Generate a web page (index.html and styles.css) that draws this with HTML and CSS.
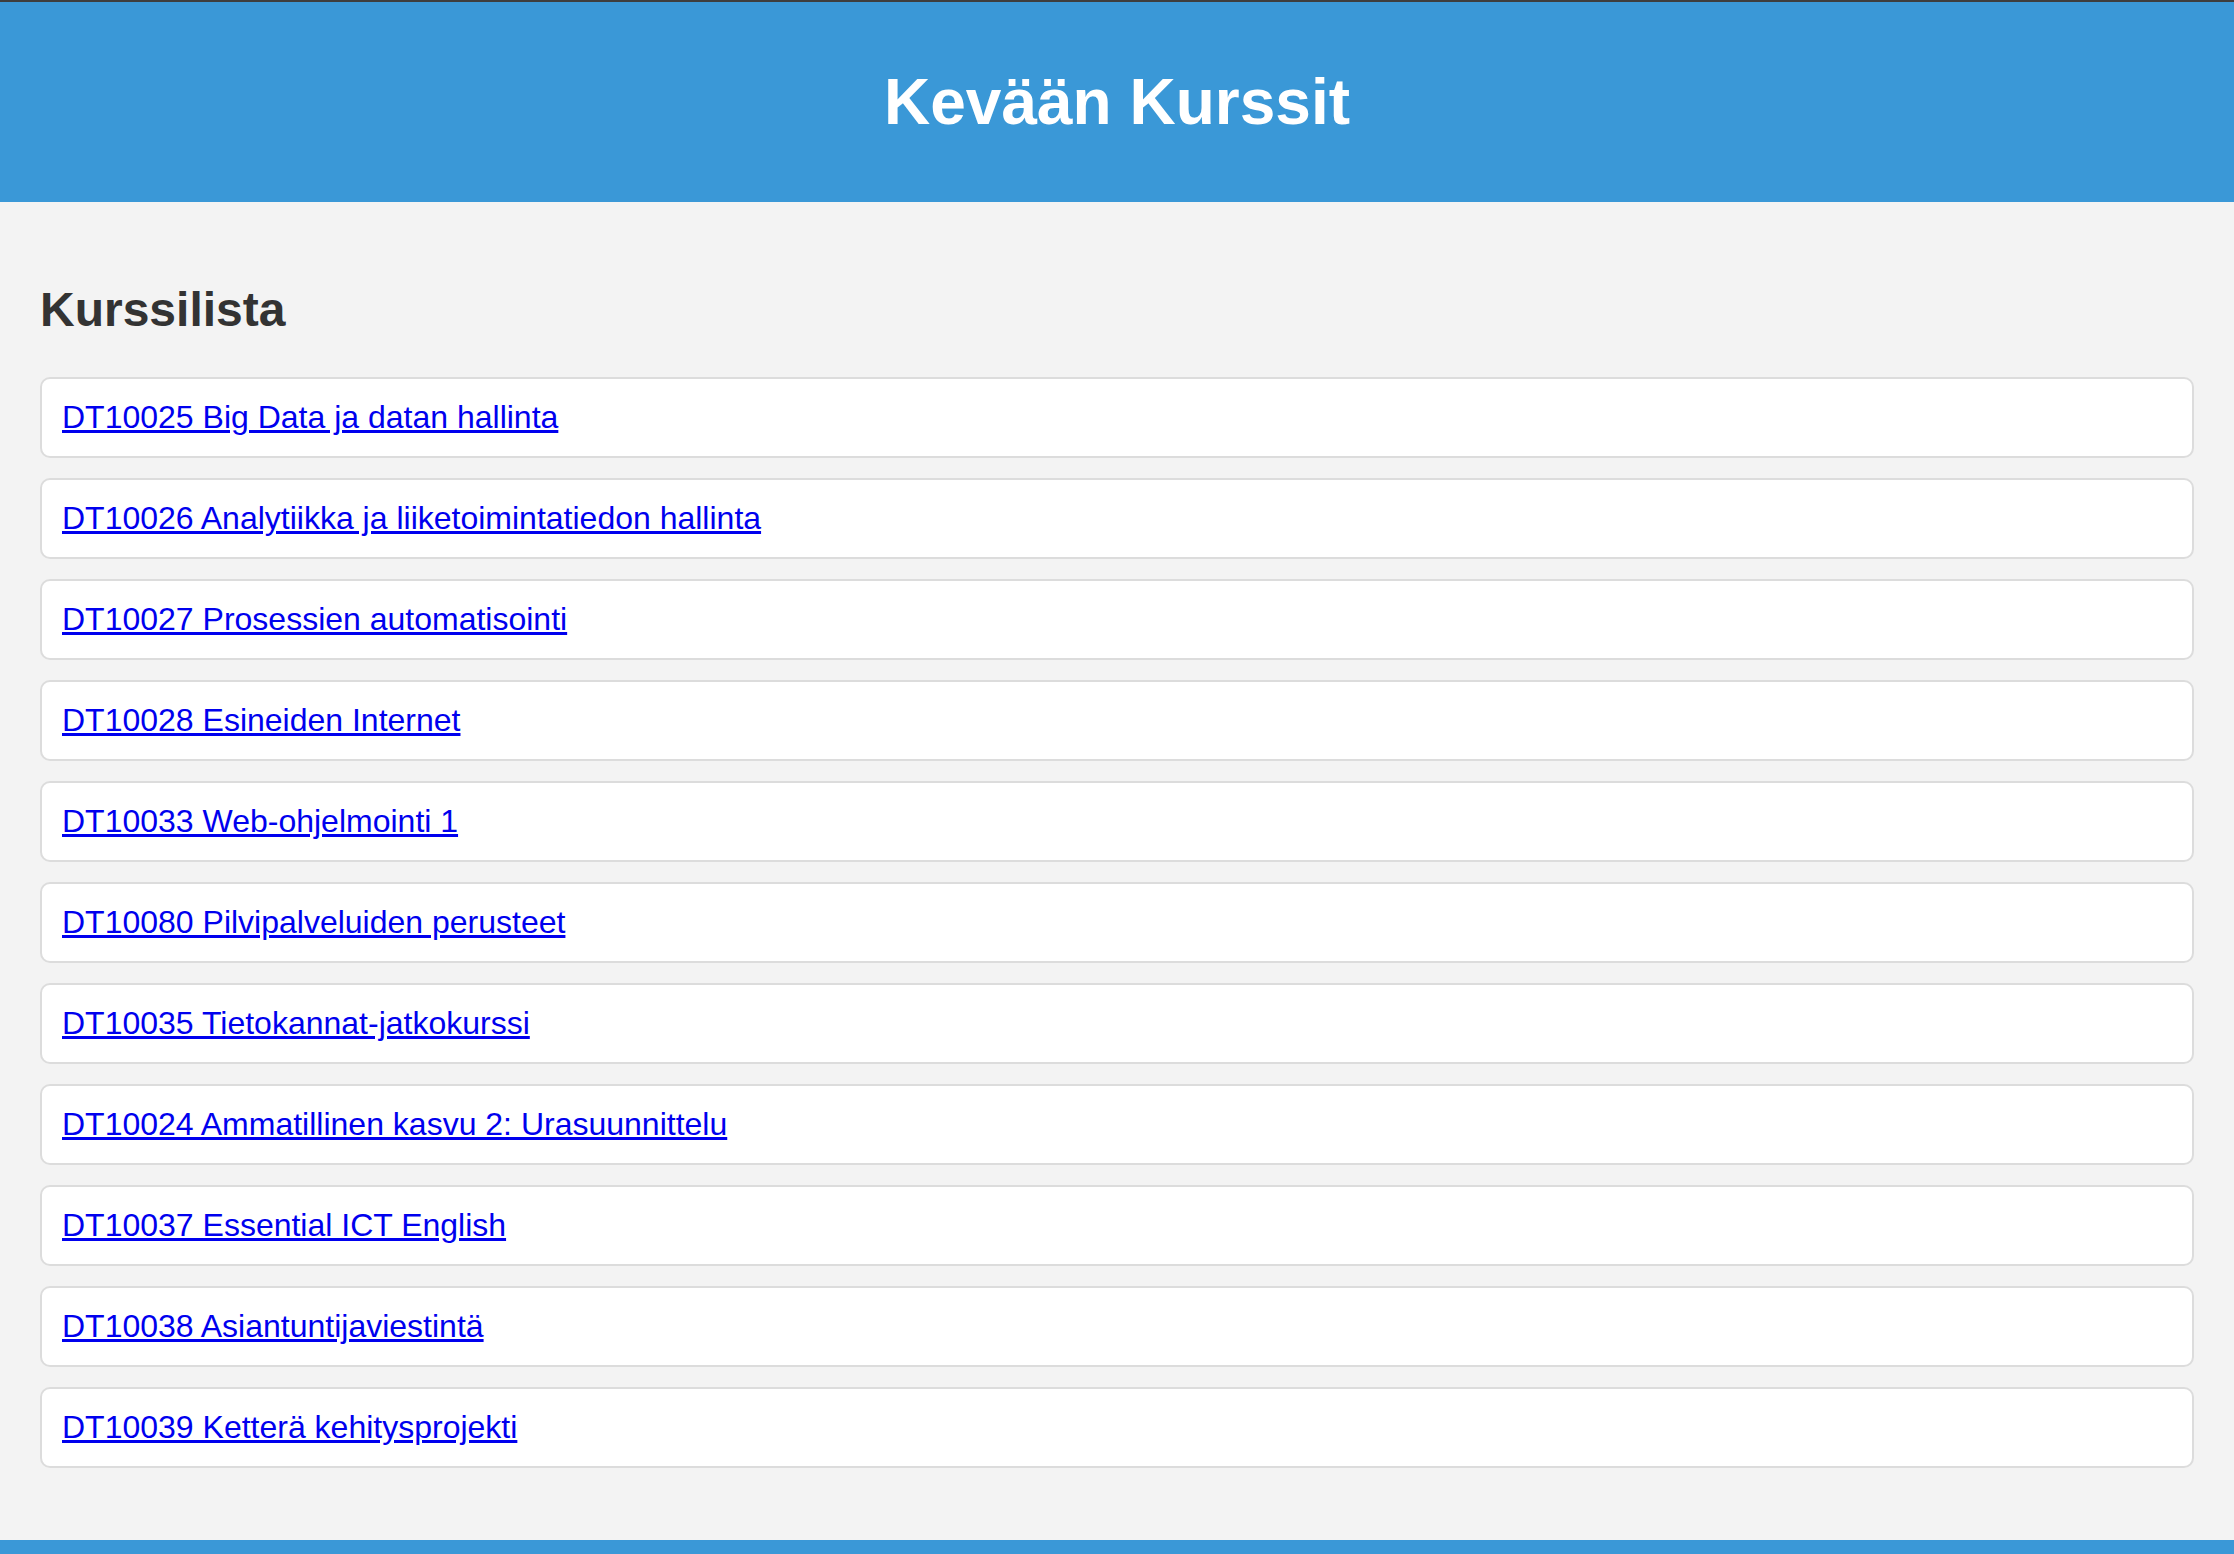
FILE: index.html
```html
<!DOCTYPE html>
<html lang="fi">
<head>
<meta charset="utf-8">
<title>Kevään Kurssit</title>
<link rel="stylesheet" href="styles.css">
</head>
<body>
<header class="site-header">
  <h1 class="site-title">Kevään Kurssit</h1>
</header>
<main class="content">
  <h2 class="section-title">Kurssilista</h2>
  <ul class="course-list">
    <li class="course-card"><a href="#">DT10025 Big Data ja datan hallinta</a></li>
    <li class="course-card"><a href="#">DT10026 Analytiikka ja liiketoimintatiedon hallinta</a></li>
    <li class="course-card"><a href="#">DT10027 Prosessien automatisointi</a></li>
    <li class="course-card"><a href="#">DT10028 Esineiden Internet</a></li>
    <li class="course-card"><a href="#">DT10033 Web-ohjelmointi 1</a></li>
    <li class="course-card"><a href="#">DT10080 Pilvipalveluiden perusteet</a></li>
    <li class="course-card"><a href="#">DT10035 Tietokannat-jatkokurssi</a></li>
    <li class="course-card"><a href="#">DT10024 Ammatillinen kasvu 2: Urasuunnittelu</a></li>
    <li class="course-card"><a href="#">DT10037 Essential ICT English</a></li>
    <li class="course-card"><a href="#">DT10038 Asiantuntijaviestintä</a></li>
    <li class="course-card"><a href="#">DT10039 Ketterä kehitysprojekti</a></li>
  </ul>
</main>
<footer class="site-footer"></footer>
</body>
</html>
```

FILE: styles.css
```css
html, body {
  margin: 0;
  padding: 0;
}

body {
  background: #f3f3f3;
  font-family: "Liberation Sans", Arial, Helvetica, sans-serif;
  border-top: 2px solid #3e3e3e;
}

.site-header {
  background: #3a98d7;
  padding: 63px 0;
  text-align: center;
}

.site-title {
  margin: 0;
  color: #ffffff;
  font-size: 64px;
  line-height: 74px;
  font-weight: bold;
}

.content {
  padding: 40px;
}

.section-title {
  margin: 40px 0;
  font-size: 48px;
  font-weight: bold;
  color: #333333;
}

.course-list {
  list-style: none;
  margin: 32px 0;
  padding: 0;
}

.course-card {
  background: #ffffff;
  border: 2px solid #dcdcdc;
  border-radius: 10px;
  padding: 20px;
  margin-bottom: 20px;
  font-size: 32px;
  line-height: 37px;
}

.course-card a {
  color: #0000ee;
  text-decoration: underline;
}

.site-footer {
  background: #3a98d7;
  height: 100px;
}
```
